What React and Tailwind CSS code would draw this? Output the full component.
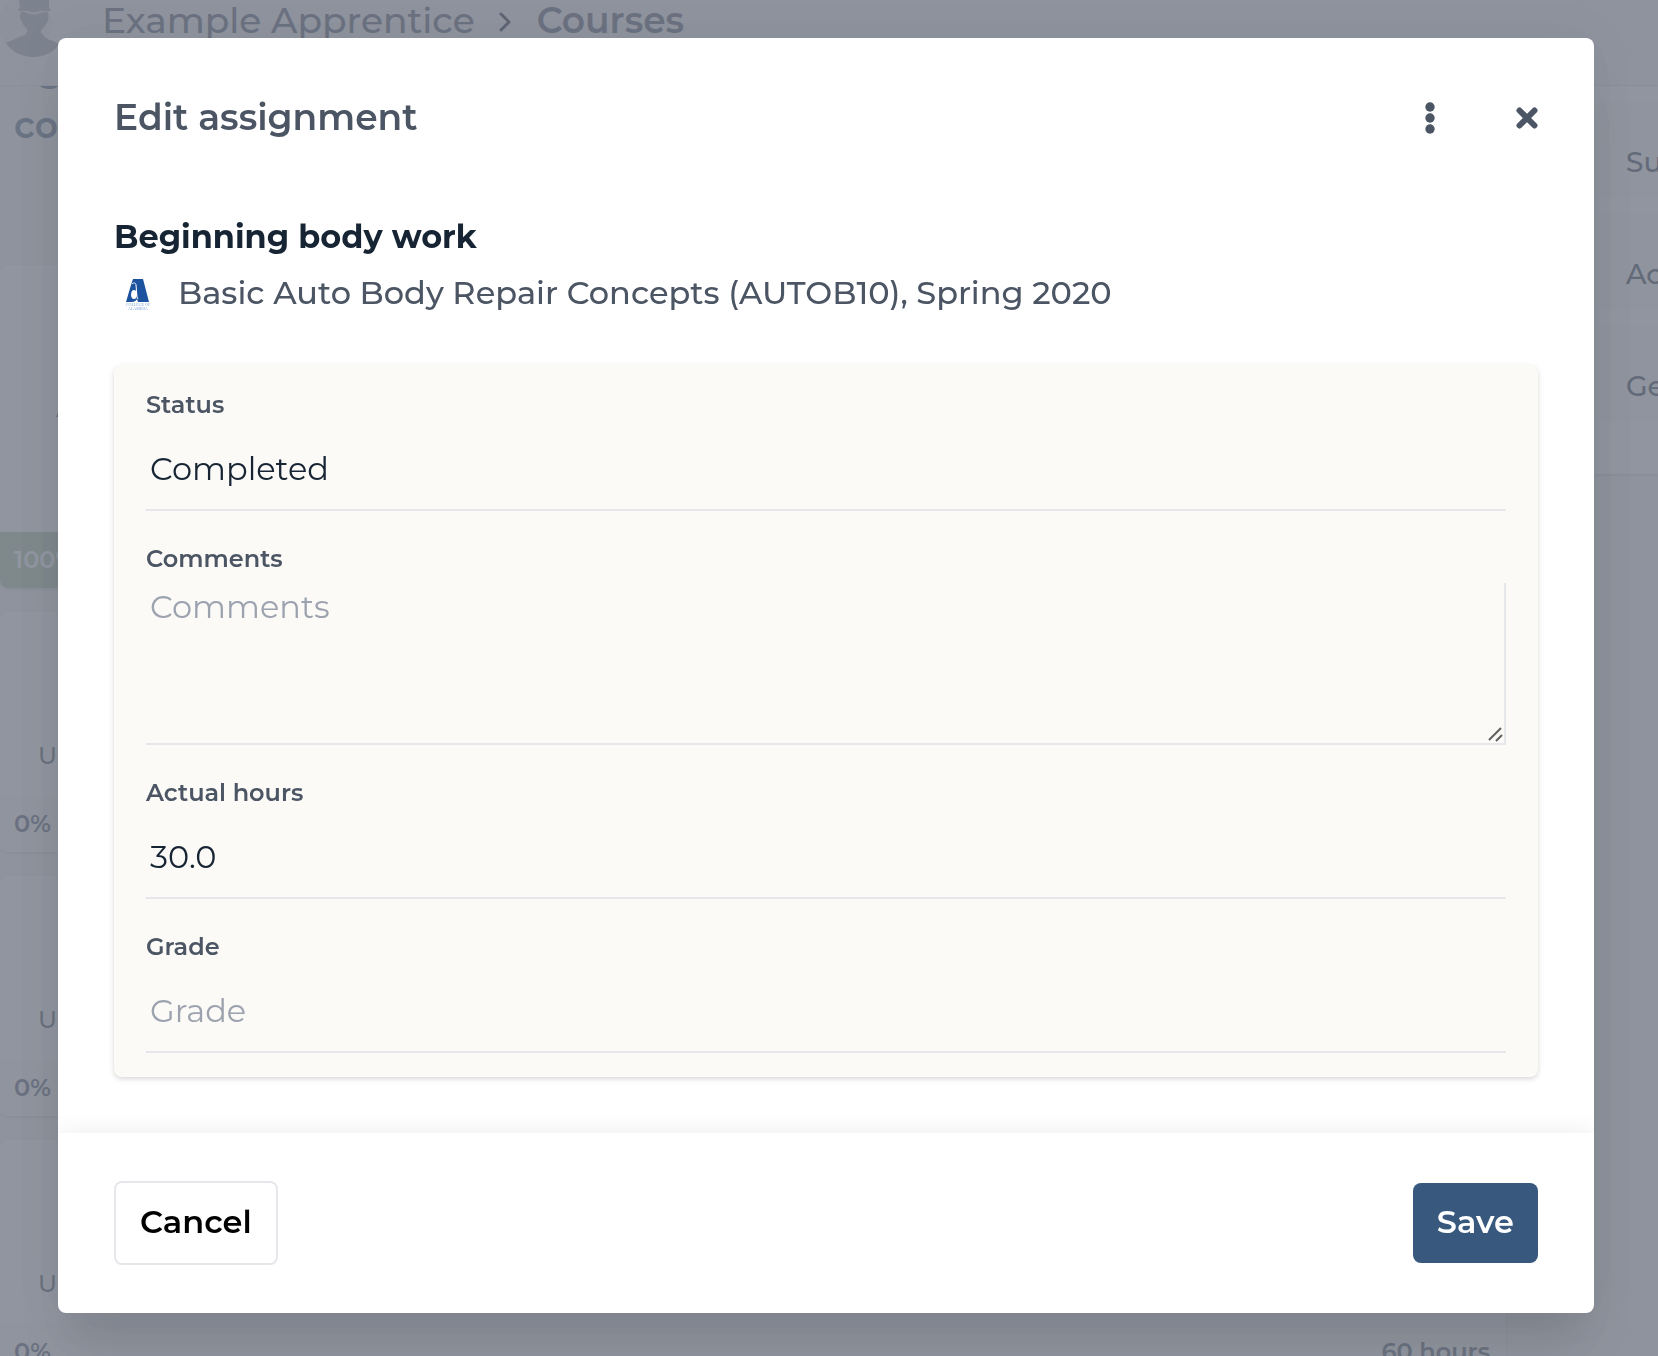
import React, { useState } from 'react';

const courseCards = [
  { label: 'U', progress: '0%', hours: '' },
  { label: 'U', progress: '0%', hours: '' },
  { label: 'U', progress: '0%', hours: '60 hours' },
];

const sideItems = ['Su', 'Ac', 'Ge'];

const labelClass = 'block h-12 text-2xl leading-12 font-semibold text-[#4b5563]';
const fieldClass =
  'block w-full border-b-2 border-[#e5e7eb] bg-transparent px-1 text-[32px] text-[#162433] placeholder-[#9ca3af] outline-none';

function Avatar() {
  return (
    <svg className="h-[60px] w-[60px] shrink-0" viewBox="0 0 60 60" aria-hidden="true">
      <circle cx="25" cy="24" r="27" fill="#000" fillOpacity="0.02" />
      <g fill="#b0b3b8">
        <path d="M19 0h30v8c2 1 2 2 1 3c-4 1-7-1-10 0c-4 2-8 2-12 0c-3-1-6 1-9 0c-1-1-1-2 1-3z" />
        <path d="M21 12c3 0 5 0 7 1c4 2 8 2 12 0c2-1 4-1 7-1c2 2 2 7 0 11c-2 2-3 5-6 7c0 3 0 4 2 4c1 4 5 5 10 7l6 3c-5 8-14 13-26 13c-11 0-21-5-27-14l11-5c4-2 8-2 9-5c2-1 1-3 1-4c-3-2-4-5-5-7c-2-3-3-7-1-9z" />
      </g>
    </svg>
  );
}

function CollegeLogo() {
  return (
    <svg className="h-12 w-12 shrink-0" viewBox="0 0 48 48" role="img" aria-label="College of Alameda">
      <path d="M19 10h10l6 23H24l-1-3c-1 2-3 3-5 3h-6l5-17z" fill="#1d529f" />
      <path d="M18 15c2-2 4-1 4 1l1 12l1 2" fill="none" stroke="#fff" strokeWidth="1" />
      <path d="M20 21c2 0 3 2 3 4c0 3-1 5-3 5c-2 0-3-2-3-4c0-3 1-5 3-5z" fill="#fff" />
      <g fill="#7fa6d2" fontFamily="Liberation Serif, serif" fontSize="4" textAnchor="middle">
        <text x="24" y="37">COLLEGE OF</text>
        <text x="24" y="41">ALAMEDA</text>
      </g>
    </svg>
  );
}

function CoursesPage() {
  return (
    <div className="h-screen overflow-hidden bg-[#f6f5f2]" aria-hidden="true">
      <header className="flex h-[86px] items-start border-b border-[#e5e7eb] bg-[#f6f5f5]">
        <Avatar />
        <nav className="ml-[42px] flex items-center text-[36px] leading-10 text-[#6b7280]">
          <span className="font-medium">Example Apprentice</span>
          <svg className="mr-6 ml-[22px] h-6 w-4" viewBox="0 0 16 24" fill="none" stroke="#374151" strokeWidth="3" strokeLinecap="round" strokeLinejoin="round">
            <path d="M4 6l8 8-8 8" />
          </svg>
          <span className="font-semibold">Courses</span>
        </nav>
      </header>

      <div className="flex items-start">
        <main className="min-w-0 grow">
          <div className="h-[179px] overflow-hidden px-3.5 text-[36px] leading-14 font-semibold text-[#6b7c93]">
            <p className="-mt-[45px] pl-6">g</p>
            <p>co</p>
          </div>
          <section className="mb-6 rounded-lg bg-white shadow">
            <p className="h-[267px] pt-32 pl-14 text-2xl text-[#6b7280]">A</p>
            <div className="h-14 rounded-b-lg bg-[#bacdb0] px-3.5 text-2xl leading-14 font-semibold text-white">100%</div>
          </section>
          {courseCards.map((card, index) => (
            <section key={index} className="mb-6 rounded-lg bg-white shadow">
              <p className="h-46 pt-30 pl-[38px] text-2xl leading-12 font-medium text-[#6b7280]">{card.label}</p>
              <div className="flex h-14 justify-between rounded-b-lg bg-[#f9f9f7] pr-4 pl-3.5 text-2xl leading-14 font-semibold text-[#6b7280]">
                <span>{card.progress}</span>
                <span>{card.hours}</span>
              </div>
            </section>
          ))}
        </main>
        <aside className="ml-16 w-22 shrink-0 bg-white pt-4 pb-9 shadow">
          {sideItems.map((item) => (
            <p key={item} className="mb-4 h-24 bg-[#f9f9f7] pt-3 pl-14 text-[28px] leading-24 font-medium text-[#4b5563]">
              {item}
            </p>
          ))}
        </aside>
      </div>
    </div>
  );
}

export default function App() {
  const [status, setStatus] = useState('Completed');
  const [comments, setComments] = useState('');
  const [hours, setHours] = useState('30.0');
  const [grade, setGrade] = useState('');

  const handleSubmit = (e) => {
    e.preventDefault();
  };

  return (
    <div className="font-['Montserrat','Inter',sans-serif]">
      <CoursesPage />

      {/* Modal */}
      <div className="fixed inset-0 overflow-hidden bg-[#6b7280]/75 pt-[38px] pr-16 pl-[58px]">
        <form
          role="dialog"
          aria-modal="true"
          aria-labelledby="modal-title"
          onSubmit={handleSubmit}
          className="overflow-clip rounded-lg bg-white shadow-[0_40px_50px_-10px_rgba(0,0,0,0.1),0_0_50px_0_rgba(0,0,0,0.06)]"
        >
          <div className="px-14 pt-14 pb-14">
            <div className="flex h-12 items-center justify-between text-[#4b5563]">
              <h1 id="modal-title" className="pb-[2px] text-[36px] leading-12 font-semibold">Edit assignment</h1>
              <div className="flex items-center gap-20">
                <button type="button" aria-label="More options">
                  <svg className="h-8 w-3" viewBox="0 0 12 32" fill="currentColor">
                    <circle cx="6" cy="5" r="4.700" />
                    <circle cx="6" cy="16" r="4.700" />
                    <circle cx="6" cy="27" r="4.700" />
                  </svg>
                </button>
                <button type="button" aria-label="Close">
                  <svg className="h-[22px] w-[22px]" viewBox="0 0 22 22" stroke="currentColor" strokeWidth="6" strokeLinecap="round">
                    <path d="M3.500 3.500l15 15M18.500 3.500l-15 15" />
                  </svg>
                </button>
              </div>
            </div>

            <h2 className="mt-[67px] text-[32px] leading-14 font-bold text-[#162433]">Beginning body work</h2>
            <div className="flex h-14 items-center gap-4 text-[32px] leading-14 font-medium text-[#4b5563]">
              <CollegeLogo />
              <p>Basic Auto Body Repair Concepts (AUTOB10), Spring 2020</p>
            </div>

            <div className="mt-11 space-y-6 rounded-lg bg-[#fbfaf7] px-8 pt-4 pb-6 shadow-[0_2px_6px_0_rgba(0,0,0,0.1),0_2px_4px_0_rgba(0,0,0,0.06)]">
              <div>
                <label htmlFor="status" className={labelClass}>Status</label>
                <select
                  id="status"
                  value={status}
                  onChange={(e) => setStatus(e.target.value)}
                  className={`${fieldClass} h-[82px] appearance-none`}
                >
                  <option>Completed</option>
                </select>
              </div>
              <div>
                <label htmlFor="comments" className={labelClass}>Comments</label>
                <div className="relative">
                  <textarea
                    id="comments"
                    placeholder="Comments"
                    value={comments}
                    onChange={(e) => setComments(e.target.value)}
                    className={`${fieldClass} h-[162px] resize-none border-r-2 leading-12`}
                  />
                  <svg
                    className="pointer-events-none absolute right-[2px] bottom-[2px] h-4 w-4"
                    viewBox="0 0 16 16"
                    stroke="#5f5f5f"
                    strokeWidth="2"
                    aria-hidden="true"
                  >
                    <path d="M1 13L13 1M8 14l6-6" />
                  </svg>
                </div>
              </div>
              <div>
                <label htmlFor="hours" className={labelClass}>Actual hours</label>
                <input
                  id="hours"
                  type="text"
                  value={hours}
                  onChange={(e) => setHours(e.target.value)}
                  className={`${fieldClass} h-[82px] pb-[2px]`}
                />
              </div>
              <div>
                <label htmlFor="grade" className={labelClass}>Grade</label>
                <input
                  id="grade"
                  type="text"
                  placeholder="Grade"
                  value={grade}
                  onChange={(e) => setGrade(e.target.value)}
                  className={`${fieldClass} h-[82px] pb-[2px]`}
                />
              </div>
            </div>
          </div>

          <div className="flex items-center justify-between px-14 py-12 shadow-[0_0_24px_0_rgba(0,0,0,0.08)]">
            <button type="button" className="h-21 rounded-lg border-2 border-[#e5e7eb] px-6 pb-[2px] text-[32px] font-semibold text-black">
              Cancel
            </button>
            <button type="submit" className="h-20 rounded-lg bg-[#38597d] px-6 pb-[2px] text-[32px] font-semibold text-white">
              Save
            </button>
          </div>
        </form>
      </div>
    </div>
  );
}
